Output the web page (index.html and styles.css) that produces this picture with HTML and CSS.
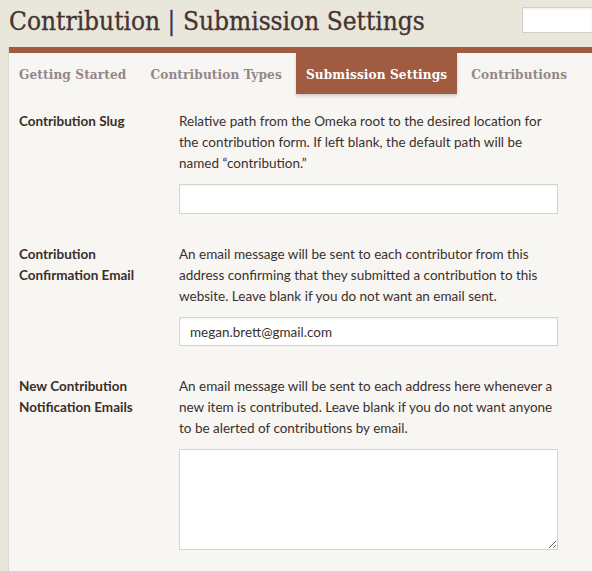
FILE: index.html
```html
<!DOCTYPE html>
<html>
<head>
<meta charset="utf-8">
<link rel="stylesheet" href="styles.css">
</head>
<body>
<header class="top">
  <h1 class="title">Contribution <span class="pipe">|</span> Submission Settings</h1>
  <input class="search" type="text">
</header>
<section class="panel">
  <nav class="tabs">
    <a class="tab">Getting Started</a>
    <a class="tab">Contribution Types</a>
    <a class="tab active">Submission Settings</a>
    <a class="tab">Contributions</a>
  </nav>
  <form class="form">
    <div class="row">
      <label class="label">Contribution Slug</label>
      <div class="field">
        <p class="desc">Relative path from the Omeka root to the desired location for the contribution form. If left blank, the default path will be named “contribution.”</p>
        <input class="text" type="text">
      </div>
    </div>
    <div class="row">
      <label class="label">Contribution Confirmation Email</label>
      <div class="field">
        <p class="desc">An email message will be sent to each contributor from this address confirming that they submitted a contribution to this website. Leave blank if you do not want an email sent.</p>
        <input class="text email" type="text" value="megan.brett@gmail.com">
      </div>
    </div>
    <div class="row">
      <label class="label">New Contribution Notification Emails</label>
      <div class="field">
        <p class="desc">An email message will be sent to each address here whenever a new item is contributed. Leave blank if you do not want anyone to be alerted of contributions by email.</p>
        <textarea class="area"></textarea>
      </div>
    </div>
  </form>
</section>
</body>
</html>
```

FILE: styles.css
```css
html, body {
  margin: 0;
  padding: 0;
}
body {
  background: #e9e6dc;
  font-family: Lato, "Open Sans", sans-serif;
  width: 592px;
  height: 571px;
  overflow: hidden;
}
.top {
  display: flex;
  align-items: flex-start;
  justify-content: space-between;
  height: 47px;
}
.title {
  margin: 0;
  padding: 5px 0 0 9px;
  font-family: "DejaVu Serif", serif;
  font-stretch: condensed;
  font-weight: normal;
  font-size: 26px;
  line-height: 32px;
  color: #46332f;
  letter-spacing: 0;
  -webkit-text-stroke: 0.3px #46332f;
}
.pipe {
  color: #3c3a52;
  -webkit-text-stroke: 0.3px #3c3a52;
}
.search {
  margin-top: 7px;
  width: 70px;
  height: 26px;
  box-sizing: border-box;
  border: 1px solid #d2d0cc;
  border-right: none;
  background: #fff;
  box-shadow: inset 0 1px 2px rgba(0,0,0,0.08);
  padding: 0;
}
.panel {
  margin-left: 9px;
  border-top: 6px solid #a05b41;
  background: #f7f6f2;
  height: 520px;
  box-shadow: -1px 0 1px rgba(0,0,0,0.06);
}
.tabs {
  display: flex;
  gap: 4px;
  height: 41px;
}
.tab {
  display: flex;
  align-items: center;
  padding: 0 10px;
  font-family: "DejaVu Serif", serif;
  font-stretch: condensed;
  font-weight: bold;
  font-size: 13.5px;
  letter-spacing: 0.1px;
  color: #94878a;
}
.tab.active {
  background: #a05b41;
  color: #fff;
  box-shadow: 0 2px 3px rgba(0,0,0,0.18);
}
.form {
  padding-top: 17px;
}
.row {
  display: grid;
  grid-template-columns: 170px 379px;
  margin-bottom: 30px;
}
.label {
  padding-left: 10px;
  padding-right: 20px;
  font-weight: bold;
  font-size: 13.5px;
  line-height: 21px;
  color: #3b2e2b;
}
.desc {
  margin: 0 0 10px;
  font-size: 13.5px;
  line-height: 21px;
  color: #3b302d;
}
.text {
  display: block;
  width: 379px;
  height: 30px;
  box-sizing: border-box;
  border: 1px solid #d6d4d0;
  background: #fff;
  box-shadow: inset 0 1px 2px rgba(0,0,0,0.06);
  padding: 0 10px;
  font-family: Lato, "Open Sans", sans-serif;
  font-size: 13.5px;
  color: #3b302d;
  margin: 0;
}
.email {
  height: 29px;
}
.area {
  display: block;
  width: 379px;
  height: 101px;
  box-sizing: border-box;
  border: 1px solid #d6d4d0;
  background: #fff;
  margin: 0;
}
```
